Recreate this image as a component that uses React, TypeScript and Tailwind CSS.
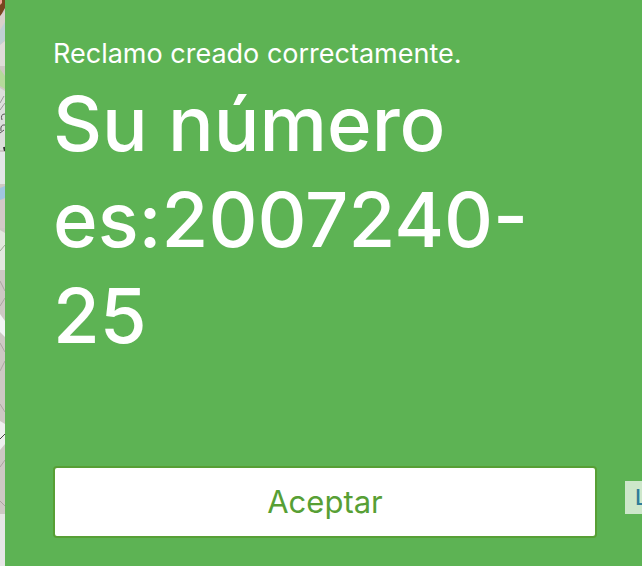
import React from 'react';

interface ClaimCreatedProps {
  claimNumber: string;
  onAccept: () => void;
}

// Slice of the street map that stays visible beside the notice
const MapStrip: React.FC = () => (
  <div className="w-[5px] shrink-0 bg-[#e6e6e6]" aria-hidden="true">
    <svg className="block" width="5" height="514" viewBox="0 0 5 514">
      <rect width="5" height="514" fill="#cdc8c4" />
      <path d="M0 0H5V8L0 17Z" fill="#79451f" />
      <path d="M0 0H2V3L0 5Z" fill="#f0a596" />
      <path d="M0 16L5 11V30H0Z" fill="#d8d0ca" />
      <path d="M0 30L5 22V40L0 45Z" fill="#bfd0d4" />
      <path d="M0 45L5 41V66H0Z" fill="#dedbd8" />
      <path d="M0 69L5 76V89L0 86Z" fill="#b4d99a" />
      <path d="M0 88L5 91V150H0Z" fill="#dcdedc" />
      <path d="M0 103L4 96M0 110L5 103" stroke="#999b99" fill="none" />
      <path d="M5 114Q0 114 2 120M5 125Q0 124 1 131M0 133L4 130" stroke="#555" fill="none" />
      <path d="M4 147L5 151" stroke="#333" strokeWidth="2" />
      <path d="M0 152H5V184H0Z" fill="#e3e6e6" />
      <path d="M0 188L5 186V198L0 200Z" fill="#9fc5df" />
      <path d="M0 200H5V228H0Z" fill="#d2c9c7" />
      <path d="M0 230L5 233V270H0Z" fill="#e2e7df" />
      <path d="M0 251L5 245" stroke="#9aaa92" fill="none" />
      <path d="M0 281L5 291M0 306L5 298" stroke="#aaa5a1" fill="none" />
      <path d="M0 314L5 321V337L0 332Z" fill="#f2f5f5" />
      <path d="M0 343L5 352M0 371L5 361M0 404L5 412" stroke="#aba6a1" fill="none" />
      <path d="M0 421L5 424V444L0 450Z" fill="#eeefef" />
      <path d="M0 439L5 434" stroke="#444" fill="none" />
      <path d="M0 467L5 460M0 501L5 506" stroke="#aaa49f" fill="none" />
    </svg>
  </div>
);

const ClaimCreated: React.FC<ClaimCreatedProps> = ({ claimNumber, onAccept }) => {
  // allow the number to wrap after its hyphen
  const title = `Su número es:${claimNumber.replace('-', '-\u200b')}`;

  return (
    <main className="flex-1 min-w-0 bg-[#5db354] pt-[33px] pb-7 pl-12 pr-[45px] text-white">
      <p className="text-[27px] leading-[42px]">Reclamo creado correctamente.</p>
      <h1 className="text-[76px] leading-[96px] font-medium">{title}</h1>
      <button
        type="button"
        onClick={onAccept}
        className="mt-[103px] h-[72px] w-full rounded-sm border-2 border-[#579f35] bg-white text-[31px] text-[#579f35]"
      >
        Aceptar
      </button>
    </main>
  );
};

const App: React.FC = () => {
  return (
    <div className="relative flex min-h-screen overflow-hidden font-['Inter','Liberation_Sans',sans-serif]">
      <MapStrip />
      <ClaimCreated claimNumber="2007240-25" onAccept={() => {}} />
      <a
        href="#"
        className="absolute right-0 bottom-[52px] h-[33px] w-[17px] overflow-hidden bg-[#cde7ca] pl-2.5 text-[22px] leading-[33px] font-medium text-[#2f7d99]"
      >
        L
      </a>
    </div>
  );
};

export default App;
